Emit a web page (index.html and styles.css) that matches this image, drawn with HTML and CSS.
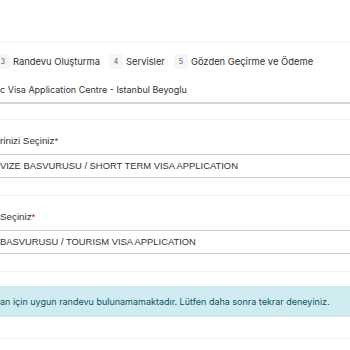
FILE: index.html
```html
<!DOCTYPE html>
<html lang="tr">
<head>
    <meta charset="UTF-8">
    <meta name="viewport" content="width=device-width, initial-scale=1.0">
    <title>Randevu</title>
    <link rel="stylesheet" href="styles.css">
</head>
<body>
    <div class="card">
        <div class="steps">
            <div class="step"><span class="num">3</span> Randevu Oluşturma</div>
            <div class="step"><span class="num">4</span> Servisler</div>
            <div class="step"><span class="num">5</span> Gözden Geçirme ve Ödeme</div>
        </div>

        <div class="group first">
            <div class="select centre">c Visa Application Centre - Istanbul Beyoglu</div>
        </div>

        <div class="group">
            <label class="label">rinizi Seçiniz<span class="req">*</span></label>
            <div class="select">VIZE BASVURUSU / SHORT TERM VISA APPLICATION</div>
        </div>

        <div class="group">
            <label class="label">Seçiniz<span class="req">*</span></label>
            <div class="select">BASVURUSU / TOURISM VISA APPLICATION</div>
        </div>

        <div class="group alert-group">
            <div class="alert">an için uygun randevu bulunamamaktadır. Lütfen daha sonra tekrar deneyiniz.</div>
        </div>

        <div class="group last"></div>
    </div>
</body>
</html>
```

FILE: styles.css
```css
body {
    margin: 0;
    background: #fff;
    font-family: Inter, "Noto Sans", sans-serif;
    color: #333;
}

.card {
    padding-top: 42px;
}

.steps {
    display: flex;
    align-items: center;
    height: 36px;
    border-top: 1px solid #f3f3f3;
    font-size: 9.4px;
    color: #2f2f2f;
}

.step {
    display: flex;
    align-items: center;
    margin-right: 9px;
}

.step:first-child {
    margin-left: -4px;
}

.num {
    display: inline-flex;
    justify-content: center;
    align-items: center;
    width: 14px;
    height: 15px;
    margin-right: 3px;
    border-radius: 3px;
    background: #f6f6f6;
    font-size: 7px;
    color: #555;
}

.group {
    border-top: 1px solid #f0f0f0;
    padding: 14px 0 17px;
}

.group.first {
    border-top: none;
    padding: 0 0 15px;
}

.label {
    display: block;
    height: 14px;
    line-height: 14px;
    margin-bottom: 6px;
    font-family: "Liberation Sans", Arial, sans-serif;
    font-size: 9.8px;
    color: #333;
}

.req {
    color: #a3192c;
}

.select {
    height: 22px;
    line-height: 22px;
    border-top: 1px solid #c8c8c8;
    border-bottom: 1px solid #c8c8c8;
    font-family: "Liberation Sans", Arial, sans-serif;
    font-size: 9.4px;
    color: #333;
    white-space: nowrap;
}

.select.centre {
    height: 23px;
    border-top: none;
    border-bottom: 2px solid #d6d6d6;
    font-family: Inter, "Noto Sans", sans-serif;
    font-size: 9px;
}

.alert-group {
    padding: 14px 0 21px;
}

.alert {
    height: 31px;
    line-height: 31px;
    background: #d1ecf1;
    color: #0c5460;
    font-size: 9px;
    white-space: nowrap;
}

.last {
    padding: 0;
    height: 12px;
}
```
